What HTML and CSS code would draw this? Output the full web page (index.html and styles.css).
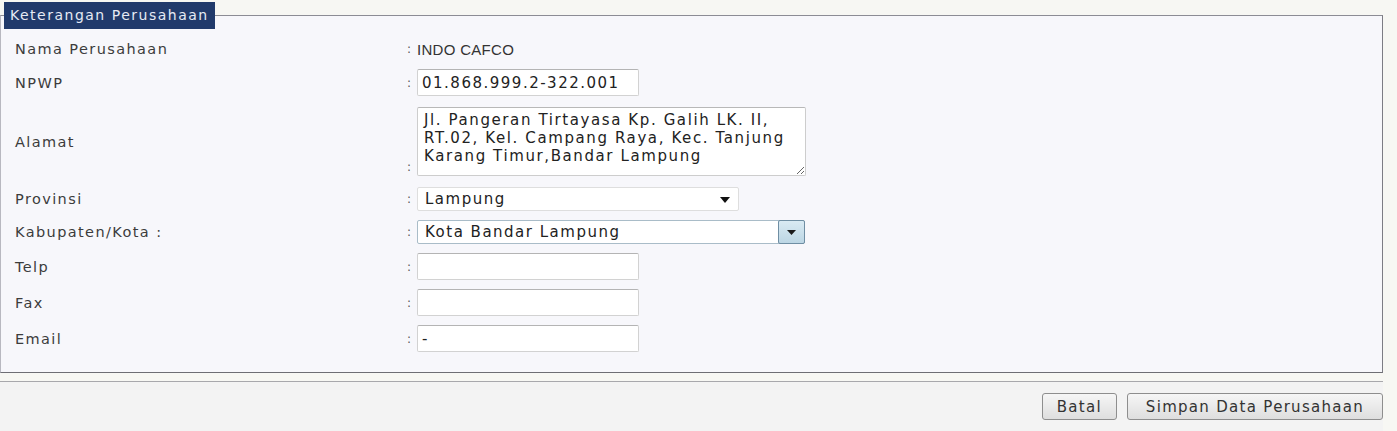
FILE: index.html
```html
<!DOCTYPE html>
<html lang="en">
<head>
    <meta charset="UTF-8">
    <title>Data Perusahaan</title>
    <link rel="stylesheet" href="styles.css">
</head>
<body>
<form class="company-form">
    <fieldset class="panel">
        <legend>Keterangan Perusahaan</legend>
        <div class="rows">
            <div class="row">
                <label class="row-label">Nama Perusahaan</label>
                <div class="row-field">
                    <span class="colon">:</span>
                    <span class="static-value">INDO CAFCO</span>
                </div>
            </div>
            <div class="row">
                <label class="row-label" for="npwp">NPWP</label>
                <div class="row-field">
                    <span class="colon">:</span>
                    <input type="text" id="npwp" class="text-input" value="01.868.999.2-322.001">
                </div>
            </div>
            <div class="row row-tall">
                <label class="row-label" for="alamat">Alamat</label>
                <div class="row-field field-bottom">
                    <span class="colon">:</span>
                    <textarea id="alamat" class="text-area">Jl. Pangeran Tirtayasa Kp. Galih LK. II, RT.02, Kel. Campang Raya, Kec. Tanjung Karang Timur,Bandar Lampung</textarea>
                </div>
            </div>
            <div class="row">
                <label class="row-label" for="provinsi">Provinsi</label>
                <div class="row-field">
                    <span class="colon">:</span>
                    <div class="select-wrap select-plain">
                        <select id="provinsi" class="select-box">
                            <option>Lampung</option>
                        </select>
                        <span class="select-arrow">
                            <svg width="10" height="6" viewBox="0 0 10 6"><path d="M0 0h10L5 6z" fill="#111"/></svg>
                        </span>
                    </div>
                </div>
            </div>
            <div class="row">
                <label class="row-label" for="kota">Kabupaten/Kota :</label>
                <div class="row-field">
                    <span class="colon">:</span>
                    <div class="select-wrap select-combo">
                        <select id="kota" class="select-box">
                            <option>Kota Bandar Lampung</option>
                        </select>
                        <span class="combo-button">
                            <svg width="9" height="5" viewBox="0 0 9 5"><path d="M0 0h9L4.5 5z" fill="#1a1a1a"/></svg>
                        </span>
                    </div>
                </div>
            </div>
            <div class="row">
                <label class="row-label" for="telp">Telp</label>
                <div class="row-field">
                    <span class="colon">:</span>
                    <input type="text" id="telp" class="text-input" value="">
                </div>
            </div>
            <div class="row">
                <label class="row-label" for="fax">Fax</label>
                <div class="row-field">
                    <span class="colon">:</span>
                    <input type="text" id="fax" class="text-input" value="">
                </div>
            </div>
            <div class="row">
                <label class="row-label" for="email">Email</label>
                <div class="row-field">
                    <span class="colon">:</span>
                    <input type="text" id="email" class="text-input" value="-">
                </div>
            </div>
        </div>
    </fieldset>

    <div class="actions">
        <button type="button" class="btn">Batal</button>
        <button type="submit" class="btn btn-wide">Simpan Data Perusahaan</button>
    </div>
</form>
</body>
</html>
```

FILE: styles.css
```css
/*Page*/
body {
    margin: 0;
    padding: 0;
    background-color: #f7f7f3;
    font-family: "DejaVu Sans", Verdana, sans-serif;
    font-size: 14.5px;
    color: #3a3a3a;
}

.company-form {
    width: 1383px;
    padding-top: 2px;
}

/*Fieldset*/
.panel {
    margin: 0;
    padding: 0 0 20px 0;
    border: 1px solid #8c8c94;
    border-left-color: #b8b8c0;
    border-bottom-color: #6e6e74;
    border-right-color: #7c7c84;
    background-color: #f7f7fb;
}

.panel legend {
    margin-left: 3px;
    padding: 0 6px;
    height: 27px;
    line-height: 27px;
    background-color: #213a6b;
    color: #e6eaf4;
    font-size: 14px;
    letter-spacing: 1.5px;
}

.rows {
    display: flex;
    flex-direction: column;
    gap: 9px;
    padding-top: 9px;
}

.row {
    display: flex;
    align-items: center;
    min-height: 22px;
}

.row-tall {
    margin: 2px 0;
}

.row-label {
    width: 392px;
    padding-left: 14px;
    letter-spacing: 1.4px;
    color: #3c3c3c;
}

.row-field {
    display: flex;
    align-items: center;
}

.field-bottom {
    align-items: flex-end;
}

.colon {
    width: 10px;
    color: #5a5a5a;
    font-size: 12px;
}

.field-bottom .colon {
    padding-bottom: 2px;
}

.static-value {
    font-family: "Liberation Sans", Arial, sans-serif;
    font-size: 15px;
    letter-spacing: 0.3px;
    color: #333;
}

/*Inputs*/
.text-input, .text-area, .select-box {
    font-family: "DejaVu Sans", Verdana, sans-serif;
    font-size: 15px;
    letter-spacing: 1.5px;
    color: #222;
    background-color: #fff;
    box-sizing: border-box;
    outline: none;
}

.text-input {
    width: 222px;
    height: 27px;
    padding: 2px 4px;
    border: 1px solid #d2d2d2;
    border-top-color: #b4b4b4;
    border-radius: 2px;
}

.text-area {
    width: 389px;
    height: 69px;
    padding: 3px 5px 3px 6px;
    line-height: 18px;
    letter-spacing: 1.6px;
    border: 1px solid #cdcdcd;
    border-top-color: #b8b8b8;
    border-radius: 2px;
    resize: both;
}

.select-wrap {
    position: relative;
}

.select-box {
    appearance: none;
    -webkit-appearance: none;
    height: 24px;
    padding: 0 7px;
    border-radius: 2px;
}

.select-plain .select-box {
    width: 322px;
    border: 1px solid #dedede;
}

.select-arrow {
    position: absolute;
    right: 9px;
    top: 10px;
    line-height: 0;
    pointer-events: none;
}

.select-combo .select-box {
    width: 388px;
    border: 1px solid #a9bcc8;
}

.combo-button {
    position: absolute;
    right: 0;
    top: 0;
    width: 27px;
    height: 24px;
    box-sizing: border-box;
    border: 1px solid #6f8ea3;
    border-radius: 2px;
    background: linear-gradient(#d9eaf3, #bcd6e4);
    display: flex;
    align-items: center;
    justify-content: center;
    pointer-events: none;
}

/*Footer buttons*/
.actions {
    margin-top: 8px;
    border-top: 1px solid #a8a8ac;
    background-color: #f3f3f3;
    display: flex;
    justify-content: flex-end;
    gap: 10px;
    padding: 11px 0 11px 0;
}

.btn {
    height: 27px;
    padding: 0 14px;
    font-family: "DejaVu Sans", Verdana, sans-serif;
    font-size: 15px;
    letter-spacing: 1.3px;
    white-space: nowrap;
    color: #333;
    background: linear-gradient(#f6f6f6, #dedede);
    border: 1px solid #8e8e8e;
    border-radius: 3px;
    cursor: pointer;
}

.btn-wide {
    width: 256px;
    padding: 0;
    letter-spacing: 1.3px;
}
```
